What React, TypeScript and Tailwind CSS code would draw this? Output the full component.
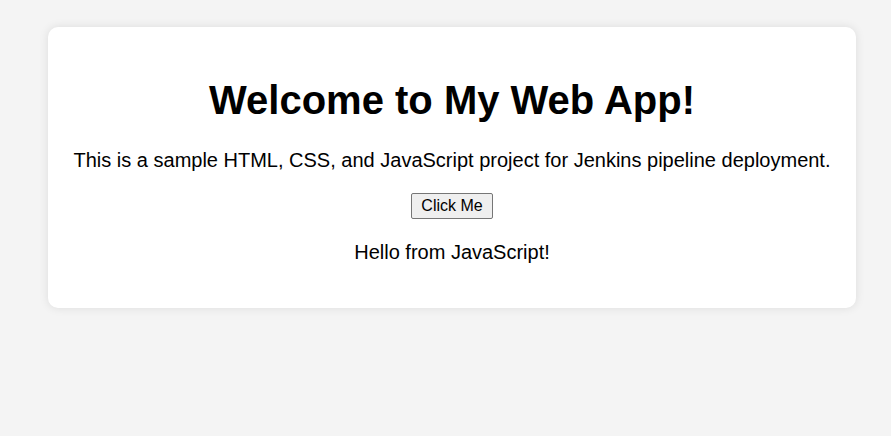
import { useState } from 'react';

// Simple landing card, centered text

export default function App() {
  const [msg] = useState('Hello from JavaScript!');

  return (
    <div className="min-h-[436px] w-full bg-[#f4f4f4] pt-[27px] font-['Liberation_Sans',Arial,sans-serif] text-black">
      <div className="ml-[48px] w-[808px] rounded-[10px] bg-white pt-[50px] pb-[44px] text-center shadow-[0_0_10px_rgba(0,0,0,0.1)]">
        <h1 className="text-[40px] leading-[46px] font-bold">Welcome to My Web App!</h1>

        <p className="mt-[26px] text-[20px] leading-[23px]">
          This is a sample HTML, CSS, and JavaScript project for Jenkins pipeline deployment.
        </p>

        <button
          type="button"
          className="mt-[21px] h-[26px] rounded-[2px] border border-[#767676] bg-[#efefef] px-[9px] align-top text-[16px] leading-[18px] text-black"
        >
          Click Me
        </button>

        <p className="mt-[22px] text-[20px] leading-[23px]">{msg}</p>
      </div>
    </div>
  );
}
